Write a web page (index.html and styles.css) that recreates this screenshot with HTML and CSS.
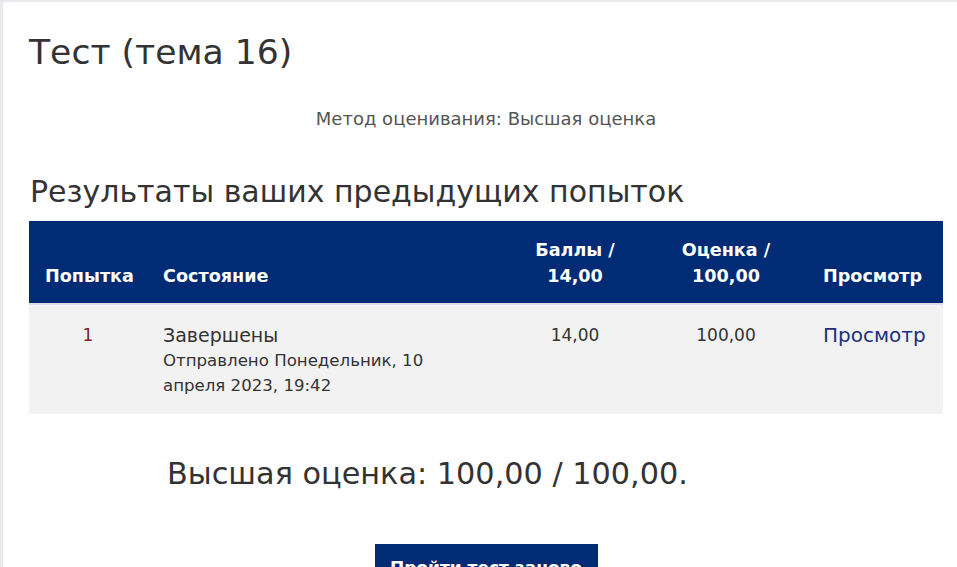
FILE: index.html
```html
<!DOCTYPE html>
<html lang="ru">
<head>
<meta charset="utf-8">
<title>Тест (тема 16)</title>
<link rel="stylesheet" href="styles.css">
</head>
<body>
<div class="page">
  <h2 class="title">Тест (тема 16)</h2>
  <p class="method">Метод оценивания: Высшая оценка</p>
  <h3 class="section">Результаты ваших предыдущих попыток</h3>
  <table class="attempts">
    <colgroup>
      <col class="c1"><col class="c2"><col class="c3"><col class="c4"><col class="c5">
    </colgroup>
    <thead>
      <tr>
        <th class="center">Попытка</th>
        <th>Состояние</th>
        <th class="center">Баллы /<br>14,00</th>
        <th class="center">Оценка /<br>100,00</th>
        <th>Просмотр</th>
      </tr>
    </thead>
    <tbody>
      <tr>
        <td class="center num">1</td>
        <td class="word">Завершены<span class="sub">Отправлено Понедельник, 10<br>апреля 2023, 19:42</span></td>
        <td class="center">14,00</td>
        <td class="center">100,00</td>
        <td class="word link-cell"><a class="link" href="#">Просмотр</a></td>
      </tr>
    </tbody>
  </table>
  <p class="best">Высшая оценка: 100,00 / 100,00.</p>
  <div class="actions"><button class="btn" type="button">Пройти тест заново</button></div>
</div>
</body>
</html>
```

FILE: styles.css
```css
html, body {
  margin: 0;
  padding: 0;
}
body {
  background: #ebe9ed;
  font-family: "DejaVu Sans", "Open Sans", sans-serif;
  color: #333;
  overflow: hidden;
  height: 567px;
}
.page {
  background: #fff;
  margin: 2px 0 0 3px;
  padding: 0 14px 0 26px;
  height: 565px;
  overflow: hidden;
}
.title {
  margin: 0;
  padding-top: 28px;
  font-size: 34.6px;
  font-weight: 400;
  line-height: 44px;
  color: #333;
}
.method {
  margin: 32px 0 0;
  text-align: center;
  font-size: 18px;
  line-height: 26px;
  color: #555;
}
.section {
  margin: 42px 0 0 1px;
  font-size: 30px;
  font-weight: 400;
  line-height: 36px;
  color: #333;
}
.attempts {
  margin-top: 11px;
  width: 914px;
  border-collapse: collapse;
  table-layout: fixed;
}
.c1 { width: 118px; }
.c2 { width: 358px; }
.c3 { width: 140px; }
.c4 { width: 162px; }
.c5 { width: 136px; }
.attempts th {
  background: #012b74;
  color: #fff;
  font-weight: 700;
  font-size: 17.6px;
  line-height: 26px;
  text-align: left;
  vertical-align: bottom;
  padding: 14px 16px 14px;
  height: 83px;
  box-sizing: border-box;
  border-bottom: 2px solid #dcdde6;
  white-space: nowrap;
}
.attempts td {
  background: #f2f2f2;
  font-size: 17px;
  line-height: 25px;
  vertical-align: top;
  padding: 18px 16px 16px;
  color: #333;
  white-space: nowrap;
}
.attempts td.word { font-size: 19px; }
.attempts td.link-cell { font-size: 20px; }
.attempts .center { text-align: center; }
.attempts .num { color: #7a1f1f; }
.sub {
  display: block;
  font-size: 16.6px;
  line-height: 25px;
}
.link {
  color: #1d2f7c;
  text-decoration: none;
}
.best {
  margin: 38px 0 0 138px;
  font-size: 30.3px;
  line-height: 44px;
  color: #333;
}
.actions {
  margin-top: 48px;
  text-align: center;
}
.btn {
  background: #012b74;
  color: #fff;
  border: 0;
  font-family: inherit;
  font-weight: 700;
  font-size: 17px;
  width: 223px;
  height: 48px;
  padding: 0;
}
```
